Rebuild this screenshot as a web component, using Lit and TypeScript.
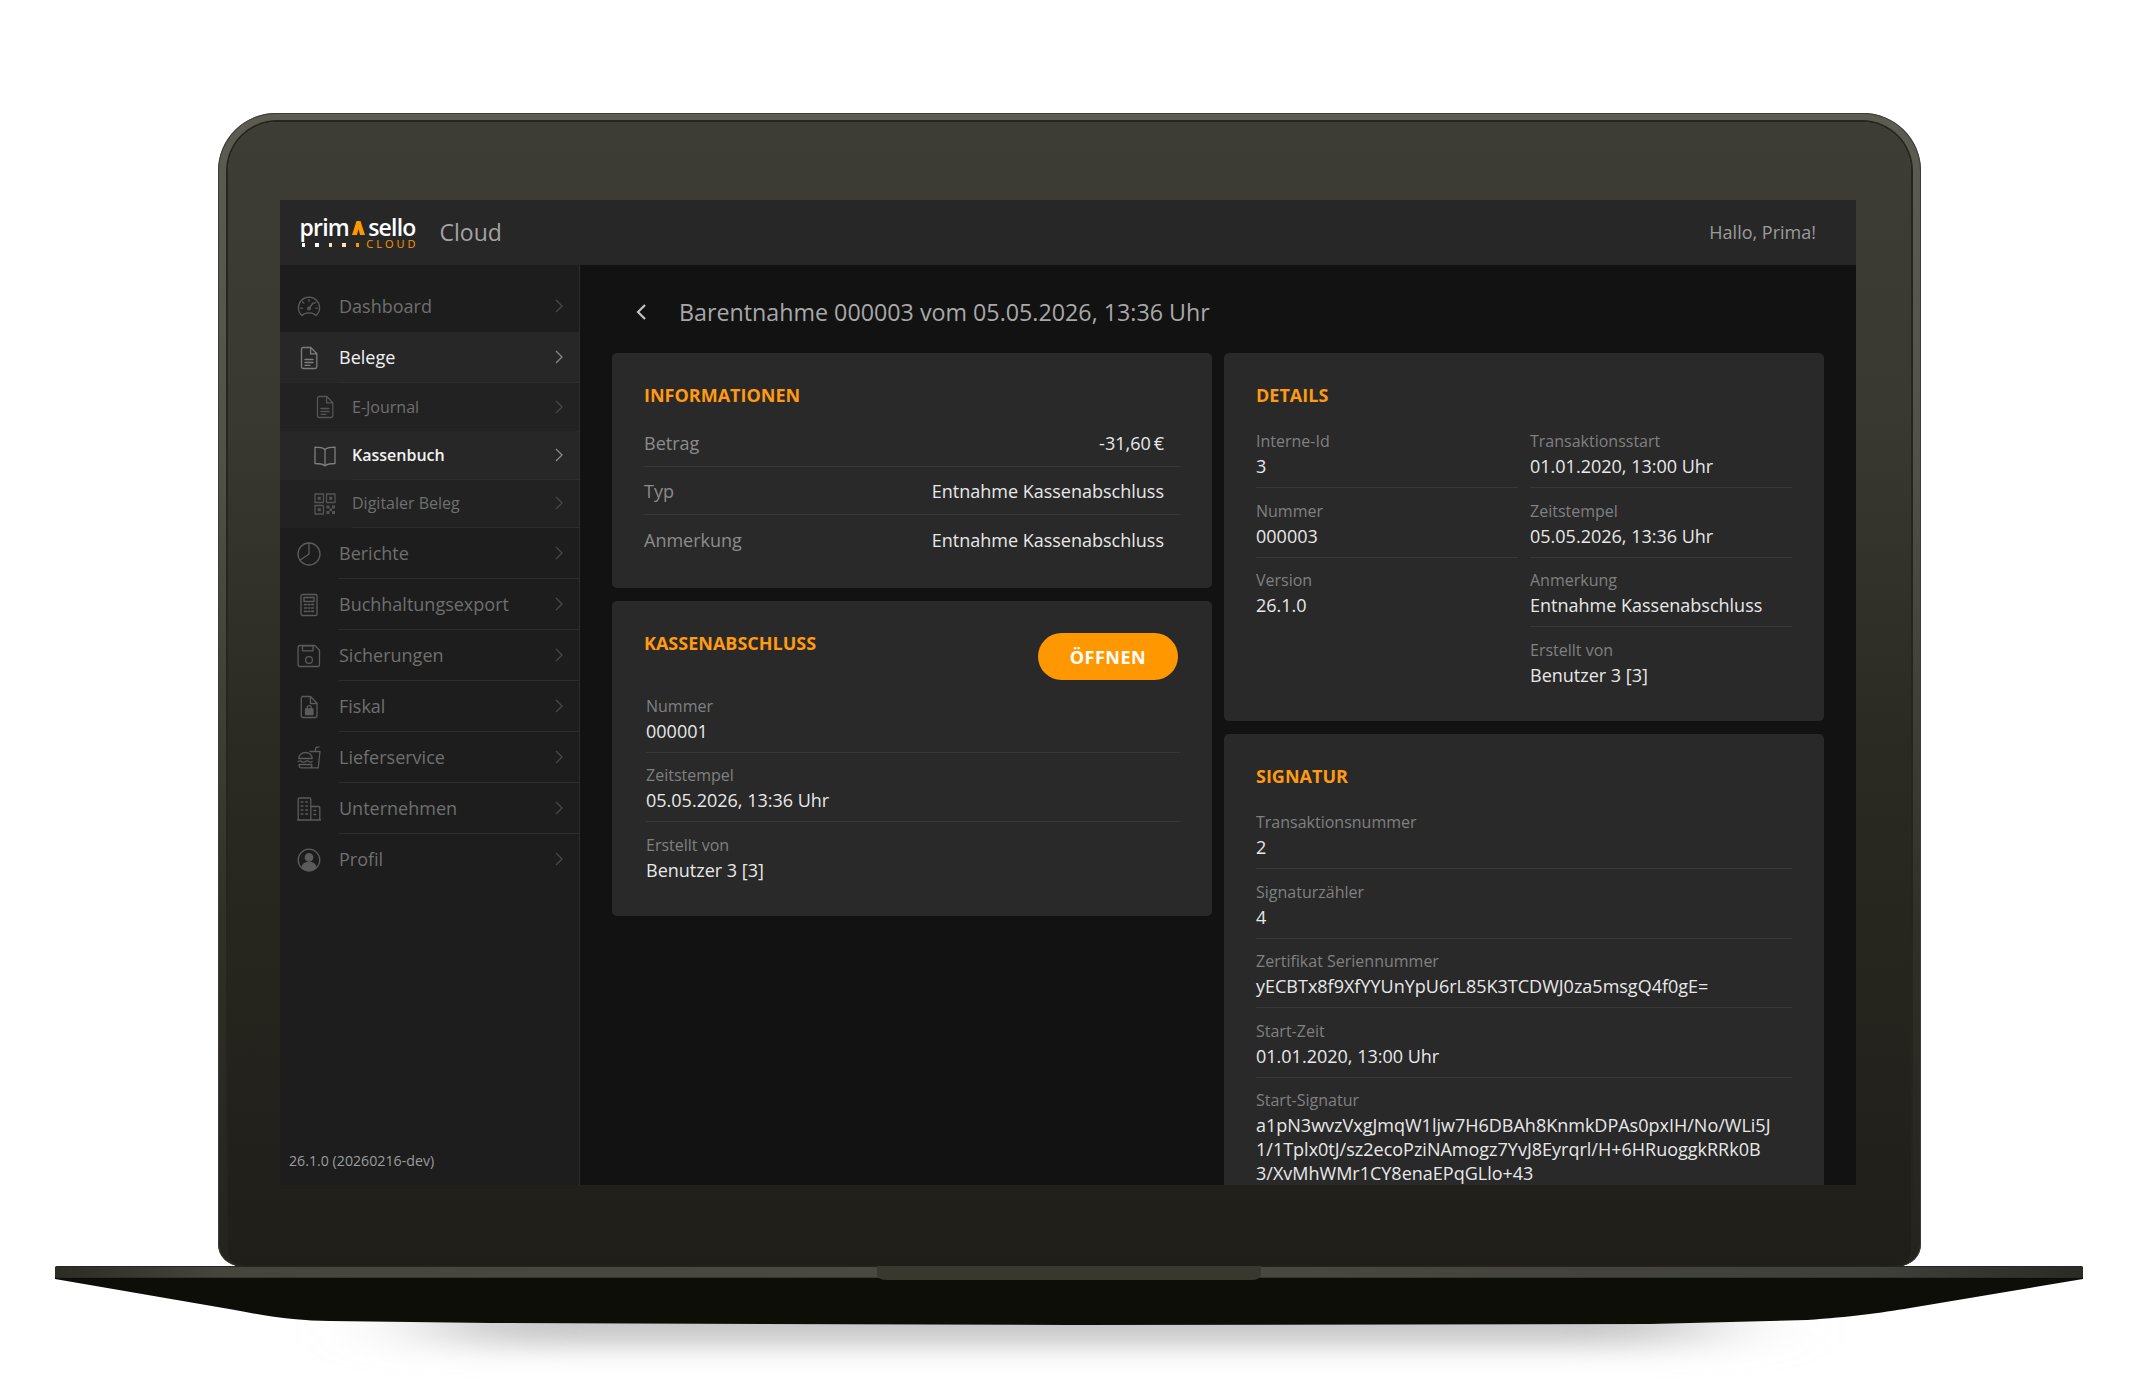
import { LitElement, css, html, svg } from 'lit';
import { customElement } from 'lit/decorators.js';

const icons: Record<string, unknown> = {
  gauge: svg`<path d="M5 20.5C2.8 18.6 1.4 15.8 1.4 12.8a10.6 10.6 0 0 1 21.2 0c0 3-1.4 5.8-3.6 7.7-1.5-1.6-4-2.6-7-2.6s-5.5 1-7 2.6z"/><path d="M12 13.5l4-5.5M12 4.6v1.6M5.6 7l1.2 1.1M3.8 13.2h1.6M18.4 7.2l-1 1M18.8 13.2h1.5"/><circle cx="12" cy="13.5" r="1.3"/>`,
  doc: svg`<path d="M6.2 1.5h7.6l6 6.2v13.1a1.7 1.7 0 0 1-1.7 1.7H6.2a1.7 1.7 0 0 1-1.7-1.7V3.2a1.7 1.7 0 0 1 1.7-1.7z"/><path d="M13.6 1.7v6.2h6M8 13.5h8M8 16.5h8M8 19.3h5"/>`,
  book: svg`<path d="M12 5.5C10 4 6.5 3.2 2 3.2v16.3c4.5 0 8 .8 10 2.3 2-1.5 5.5-2.3 10-2.3V3.2c-4.5 0-8 .8-10 2.3z"/><path d="M12 5.5v16.3"/>`,
  qr: svg`<path d="M2 2h8.5v8.5H2zM13.5 2H22v8.5h-8.5zM2 13.5h8.5V22H2z"/><path d="M4.8 4.8h3v3h-3zM16.2 4.8h3v3h-3zM4.8 16.2h3v3h-3z" fill="currentColor" stroke="none"/><path d="M13.5 13.5h3v3h-3zM19 13.5h3v3h-3zM16.5 16.5h2.5v2.5h-2.5zM13.5 19h3v3h-3zM19 19h3v3h-3z" fill="currentColor" stroke="none"/>`,
  pie: svg`<circle cx="12" cy="12" r="11"/><path d="M12 1v11l-9 6.2"/>`,
  calc: svg`<rect x="4" y="1.5" width="16" height="21" rx="1.6"/><path d="M7 4.5h10v4H7z"/><path d="M7.5 11.6h1.8M11.1 11.6h1.8M14.7 11.6h1.8M7.5 15h1.8M11.1 15h1.8M14.7 15h1.8M7.5 18.4h1.8M11.1 18.4h1.8M14.7 18.4h1.8" stroke-width="1.6"/>`,
  disk: svg`<path d="M2.8 1.5h15l4.7 4.7v14.6a1.7 1.7 0 0 1-1.7 1.7H2.8a1.7 1.7 0 0 1-1.7-1.7V3.2a1.7 1.7 0 0 1 1.7-1.7z"/><path d="M5.5 1.8h10.5v5H5.5z"/><circle cx="12" cy="16" r="3.4"/>`,
  lock: svg`<path d="M6 1.5h7.5l6.5 6.8v12.5a1.7 1.7 0 0 1-1.7 1.7H6a1.7 1.7 0 0 1-1.7-1.7V3.2A1.7 1.7 0 0 1 6 1.5z"/><path d="M13.4 1.8v6.7h6.4"/><path d="M8.5 14h7.5v5.5H8.5z" fill="currentColor"/><path d="M10.2 14v-1.3a2 2 0 0 1 4 0V14"/>`,
  food: svg`<path d="M1.8 12.5c0-3.6 3-6 6.7-6s6.7 2.4 6.7 6zM1.2 15.5c1.3-1 2.3-1 3.6 0s2.3 1 3.6 0 2.3-1 3.6 0 2 .9 3.2 0M2.2 18.5h12.6v1.4a2 2 0 0 1-2 2H4.2a2 2 0 0 1-2-2z"/><path d="M13 5.5h10l-1.8 16.4H14.5M18 5.4l1-3.9 3-.6"/>`,
  firm: svg`<path d="M1.2 23V2.2A1.2 1.2 0 0 1 2.4 1h10.2a1.2 1.2 0 0 1 1.2 1.2V23zM13.8 9.5h7.8a1.2 1.2 0 0 1 1.2 1.2V23h-9M.5 23h23"/><path d="M4.2 5h1.6M8.8 5h1.6M4.2 9h1.6M8.8 9h1.6M4.2 13h1.6M8.8 13h1.6M4.2 17h1.6M8.8 17h1.6M17 13.5h1.6M17 17.5h1.6" stroke-width="1.5"/>`,
  user: svg`<circle cx="12" cy="12" r="10.8"/><circle cx="12" cy="9.4" r="3.7" fill="currentColor"/><path d="M4.8 19.5c1.1-3.4 3.9-5 7.2-5s6.1 1.6 7.2 5c-1.9 2-4.5 3.2-7.2 3.2s-5.3-1.2-7.2-3.2z" fill="currentColor"/>`,
};

type NavItem = { label: string; icon: string; active?: boolean; sub?: boolean; flat?: boolean };

const nav: NavItem[] = [
  { label: 'Dashboard', icon: 'gauge', flat: true },
  { label: 'Belege', icon: 'doc', active: true },
  { label: 'E-Journal', icon: 'doc', sub: true, flat: true },
  { label: 'Kassenbuch', icon: 'book', sub: true, active: true },
  { label: 'Digitaler Beleg', icon: 'qr', sub: true },
  { label: 'Berichte', icon: 'pie' },
  { label: 'Buchhaltungsexport', icon: 'calc' },
  { label: 'Sicherungen', icon: 'disk' },
  { label: 'Fiskal', icon: 'lock' },
  { label: 'Lieferservice', icon: 'food' },
  { label: 'Unternehmen', icon: 'firm' },
  { label: 'Profil', icon: 'user', flat: true },
];

@customElement('app-root')
export class AppRoot extends LitElement {
  static override styles = css`
    :host {
      display: block;
      font-family: 'Open Sans', 'Noto Sans', sans-serif;
    }

    .stage {
      width: 2143px;
      height: 1382px;
      padding-top: 113px;
      box-sizing: border-box;
      background: #fff;
      overflow: hidden;
    }

    .lid {
      margin-left: 218px;
      width: 1703px;
      height: 1153px;
      box-sizing: border-box;
      padding: 9px 10px 0;
      border-radius: 58px 58px 22px 22px;
      background: linear-gradient(#5c5c53 0%, #515148 30%, #303029 70%, #24241e 100%);
      box-shadow: inset 0 0 0 1px #3c3c34;
    }

    .bezel {
      height: 100%;
      box-sizing: border-box;
      padding: 78px 55px 81px 52px;
      border-radius: 49px 49px 16px 16px;
      background: linear-gradient(#3d3c35 0%, #3a3931 25%, #2a2922 55%, #1f1e18 100%);
      box-shadow: 0 0 0 2px #25251f;
    }

    .screen {
      height: 100%;
      display: flex;
      flex-direction: column;
      overflow: hidden;
      background: #121212;
    }

    header {
      flex: none;
      height: 65px;
      box-sizing: border-box;
      display: flex;
      align-items: center;
      padding: 0 40px 2px 19.5px;
      background: #272727;
    }

    .logo {
      width: 116px;
      display: flex;
      flex-direction: column;
      color: #fff;
    }

    .logo-top {
      display: flex;
      justify-content: space-between;
      height: 24px;
      font-size: 23px;
      font-weight: 600;
      letter-spacing: -0.8px;
      line-height: 24px;
      white-space: nowrap;
    }

    .logo-top svg {
      flex: none;
      width: 13px;
      height: 14px;
      margin-top: 6px;
    }

    .logo-sub {
      display: flex;
      justify-content: space-between;
      height: 9px;
    }

    .dots {
      display: flex;
      gap: 10px;
      padding: 4px 0 0 2px;
    }

    .dots i {
      width: 3.5px;
      height: 3.5px;
      background: #fff;
    }

    .dots i:nth-child(3),
    .dots i:nth-child(4) {
      background: #ffe2b8;
    }

    .dots i:last-child {
      background: #ff9800;
    }

    .cloud-mark {
      color: #ff9800;
      font-size: 11px;
      line-height: 9px;
      letter-spacing: 3px;
      margin-right: -3px;
    }

    .product {
      margin-left: 24px;
      font-size: 23px;
      color: #a3a3a3;
    }

    .hello {
      margin-left: auto;
      font-size: 18px;
      color: #9b9b9b;
    }

    .body {
      flex: 1;
      min-height: 0;
      display: flex;
    }

    aside {
      flex: none;
      width: 300px;
      box-sizing: border-box;
      display: flex;
      flex-direction: column;
      padding-top: 16px;
      background: #1d1d1d;
      border-right: 1px solid #2e2e2e;
    }

    .row {
      flex: none;
      height: 51px;
      display: flex;
      color: #6f6f6f;
      font-size: 18px;
    }

    .row.sub {
      height: 48.4px;
      font-size: 16px;
      background: #222;
    }

    .row.active {
      background: #272727;
      color: #f2f2f2;
    }

    .row.active.sub {
      font-weight: 600;
    }

    .ico {
      flex: none;
      width: 59px;
      box-sizing: border-box;
      padding-right: 1px;
      display: flex;
      align-items: center;
      justify-content: center;
      color: #5b5b5b;
    }

    .row.sub .ico {
      width: 72px;
      padding-left: 20px;
      padding-right: 3px;
      color: #555;
    }

    .row.active .ico {
      color: #7d7d7d;
    }

    .ico svg {
      width: 24px;
      height: 24px;
      fill: none;
      stroke: currentColor;
      stroke-width: 1.3;
      stroke-linejoin: round;
      stroke-linecap: round;
    }

    .row-main {
      flex: 1;
      display: flex;
      align-items: center;
      justify-content: space-between;
      padding-right: 16px;
      border-bottom: 1px solid #2e2e2e;
    }

    .row.flat .row-main {
      border-bottom-color: transparent;
    }

    .chev {
      width: 8px;
      height: 14px;
      fill: none;
      stroke: #484848;
      stroke-width: 1.3;
    }

    .row.active .chev {
      stroke: #8a8a8a;
    }

    .version {
      margin-top: auto;
      padding: 0 0 14px 9px;
      font-size: 14.2px;
      line-height: 20px;
      color: #9c9c9c;
    }

    main {
      flex: 1;
      min-width: 0;
      padding: 0 32px;
      overflow: hidden;
    }

    .title {
      height: 88px;
      display: flex;
      align-items: center;
      padding-top: 5px;
      box-sizing: border-box;
      font-size: 23.25px;
      color: #a8a8a8;
    }

    .title svg {
      flex: none;
      width: 12px;
      height: 18px;
      margin: 0 32px 0 23px;
      fill: none;
      stroke: #c4c4c4;
      stroke-width: 2.2;
    }

    .grid {
      display: grid;
      grid-template-columns: 600px 600px;
      gap: 12px;
      align-items: start;
    }

    .col {
      display: flex;
      flex-direction: column;
      gap: 13px;
    }

    .card {
      flex: none;
      box-sizing: border-box;
      padding: 31px 32px 24.5px;
      background: #292929;
      border-radius: 5px;
    }

    .card.info {
      padding-bottom: 24px;
    }

    .card.info h2 {
      margin-bottom: 12px;
    }

    h2 {
      margin: 0 0 11px;
      font-size: 18px;
      line-height: 22px;
      font-weight: 700;
      color: #ff9a12;
    }

    .info-row {
      height: 48.5px;
      box-sizing: border-box;
      display: flex;
      align-items: center;
      justify-content: space-between;
      padding: 1.5px 16px 0 0;
      font-size: 18px;
      color: #8c8c8c;
      border-bottom: 1px solid #383838;
    }

    .info-row:last-child {
      border-bottom: 0;
    }

    .info-row b {
      font-weight: 400;
      color: #e8e8e8;
    }

    .card-head {
      display: flex;
      justify-content: space-between;
      align-items: flex-start;
      margin-bottom: 2px;
    }

    .card-head h2 {
      margin: 0;
    }

    button {
      width: 140px;
      height: 47px;
      margin: 1px 2px 0 0;
      border: 0;
      border-radius: 24px;
      background: #ff9800;
      color: #fff;
      font: 700 18px 'Open Sans', sans-serif;
      letter-spacing: 0.5px;
      padding: 2px 0 0;
    }

    .fields {
      display: flex;
      flex-direction: column;
      padding-top: 1.5px;
    }

    .fields.indent {
      margin-left: 2px;
    }

    .field {
      height: 69.5px;
      box-sizing: border-box;
      padding-top: 12.5px;
      border-bottom: 1px solid #383838;
    }

    .field:last-child {
      border-bottom: 0;
    }

    .field.tall {
      height: auto;
    }

    .label {
      font-size: 16px;
      line-height: 20px;
      color: #808080;
    }

    .value {
      margin-top: 3px;
      font-size: 18px;
      line-height: 24px;
      color: #e8e8e8;
      white-space: pre-line;
    }

    .two {
      display: grid;
      grid-template-columns: 262px 262px;
      gap: 12px;
    }

    .base {
      display: block;
    }
  `;

  private field(label: string, value: string, tall = false) {
    return html`<div class="field ${tall ? 'tall' : ''}">
      <div class="label">${label}</div>
      <div class="value">${value}</div>
    </div>`;
  }

  private navRow(item: NavItem) {
    const cls = ['row', item.sub ? 'sub' : '', item.active ? 'active' : '', item.flat ? 'flat' : ''].join(' ');
    return html`<div class=${cls}>
      <span class="ico"><svg viewBox="0 0 24 24">${icons[item.icon]}</svg></span>
      <span class="row-main">
        <span>${item.label}</span>
        <svg class="chev" viewBox="0 0 8 14"><path d="M1 1l6 6-6 6" /></svg>
      </span>
    </div>`;
  }

  private renderBase() {
    return svg`<svg class="base" width="2143" height="116" viewBox="0 1266 2143 116">
      <defs>
        <linearGradient id="strip" x1="0" x2="1" y1="0" y2="0">
          <stop offset="0" stop-color="#2c2c25" />
          <stop offset="0.08" stop-color="#45453d" />
          <stop offset="0.5" stop-color="#4a4a43" />
          <stop offset="0.9" stop-color="#40403a" />
          <stop offset="1" stop-color="#2b2b25" />
        </linearGradient>
        <filter id="soft" x="-20%" y="-100%" width="140%" height="300%">
          <feGaussianBlur stdDeviation="60 14" />
        </filter>
      </defs>
      <path d="M440 1300H1700V1345H440Z" fill="#c4c4c4" filter="url(#soft)" />
      <path
        d="M55 1277V1279L235 1310C270 1317 300 1321 330 1321L491 1323L1070 1325L1650 1324L1807 1320C1850 1317 1880 1313 1910 1308L2083 1279V1277Z"
        fill="#0e0e09"
      />
      <rect x="55" y="1266" width="2028" height="12" rx="1.5" fill="#26261f" />
      <rect x="55" y="1267" width="2028" height="10.5" rx="1.5" fill="url(#strip)" />
      <path d="M877 1266H1261V1274Q1261 1280 1250 1280H888Q877 1280 877 1274Z" fill="#38382f" />
    </svg>`;
  }

  protected override render() {
    return html`
      <div class="stage">
        <div class="lid">
          <div class="bezel">
            <div class="screen">
              <header>
                <div class="logo">
                  <div class="logo-top">
                    <span>prim</span>
                    <svg viewBox="0 0 13 14"><path d="M4.5 0h4l4.500 14H8L6.500 8 5 14H0z" fill="#ff9800" /></svg>
                    <span>sello</span>
                  </div>
                  <div class="logo-sub">
                    <span class="dots"><i></i><i></i><i></i><i></i><i></i></span>
                    <span class="cloud-mark">CLOUD</span>
                  </div>
                </div>
                <span class="product">Cloud</span>
                <span class="hello">Hallo, Prima!</span>
              </header>
              <div class="body">
                <aside>
                  ${nav.map((n) => this.navRow(n))}
                  <div class="version">26.1.0 (20260216-dev)</div>
                </aside>
                <main>
                  <div class="title">
                    <svg viewBox="0 0 12 18"><path d="M10 2L3 9l7 7" /></svg>
                    <span>Barentnahme 000003 vom 05.05.2026, 13:36 Uhr</span>
                  </div>
                  <div class="grid">
                    <div class="col">
                      <section class="card info">
                        <h2>INFORMATIONEN</h2>
                        <div class="info-row"><span>Betrag</span><b>-31,60\u2009€</b></div>
                        <div class="info-row"><span>Typ</span><b>Entnahme Kassenabschluss</b></div>
                        <div class="info-row"><span>Anmerkung</span><b>Entnahme Kassenabschluss</b></div>
                      </section>
                      <section class="card">
                        <div class="card-head">
                          <h2>KASSENABSCHLUSS</h2>
                          <button>ÖFFNEN</button>
                        </div>
                        <div class="fields indent">
                          ${this.field('Nummer', '000001')}
                          ${this.field('Zeitstempel', '05.05.2026, 13:36 Uhr')}
                          ${this.field('Erstellt von', 'Benutzer 3 [3]')}
                        </div>
                      </section>
                    </div>
                    <div class="col">
                      <section class="card">
                        <h2>DETAILS</h2>
                        <div class="two">
                          <div class="fields">
                            ${this.field('Interne-Id', '3')}
                            ${this.field('Nummer', '000003')}
                            ${this.field('Version', '26.1.0')}
                          </div>
                          <div class="fields">
                            ${this.field('Transaktionsstart', '01.01.2020, 13:00 Uhr')}
                            ${this.field('Zeitstempel', '05.05.2026, 13:36 Uhr')}
                            ${this.field('Anmerkung', 'Entnahme Kassenabschluss')}
                            ${this.field('Erstellt von', 'Benutzer 3 [3]')}
                          </div>
                        </div>
                      </section>
                      <section class="card">
                        <h2>SIGNATUR</h2>
                        <div class="fields">
                          ${this.field('Transaktionsnummer', '2')}
                          ${this.field('Signaturzähler', '4')}
                          ${this.field('Zertifikat Seriennummer', 'yECBTx8f9XfYYUnYpU6rL85K3TCDWJ0za5msgQ4f0gE=')}
                          ${this.field('Start-Zeit', '01.01.2020, 13:00 Uhr')}
                          ${this.field(
                            'Start-Signatur',
                            'a1pN3wvzVxgJmqW1ljw7H6DBAh8KnmkDPAs0pxIH/No/WLi5J\n1/1Tplx0tJ/sz2ecoPziNAmogz7YvJ8Eyrqrl/H+6HRuoggkRRk0B\n3/XvMhWMr1CY8enaEPqGLlo+43',
                            true,
                          )}
                        </div>
                      </section>
                    </div>
                  </div>
                </main>
              </div>
            </div>
          </div>
        </div>
        ${this.renderBase()}
      </div>
    `;
  }
}
